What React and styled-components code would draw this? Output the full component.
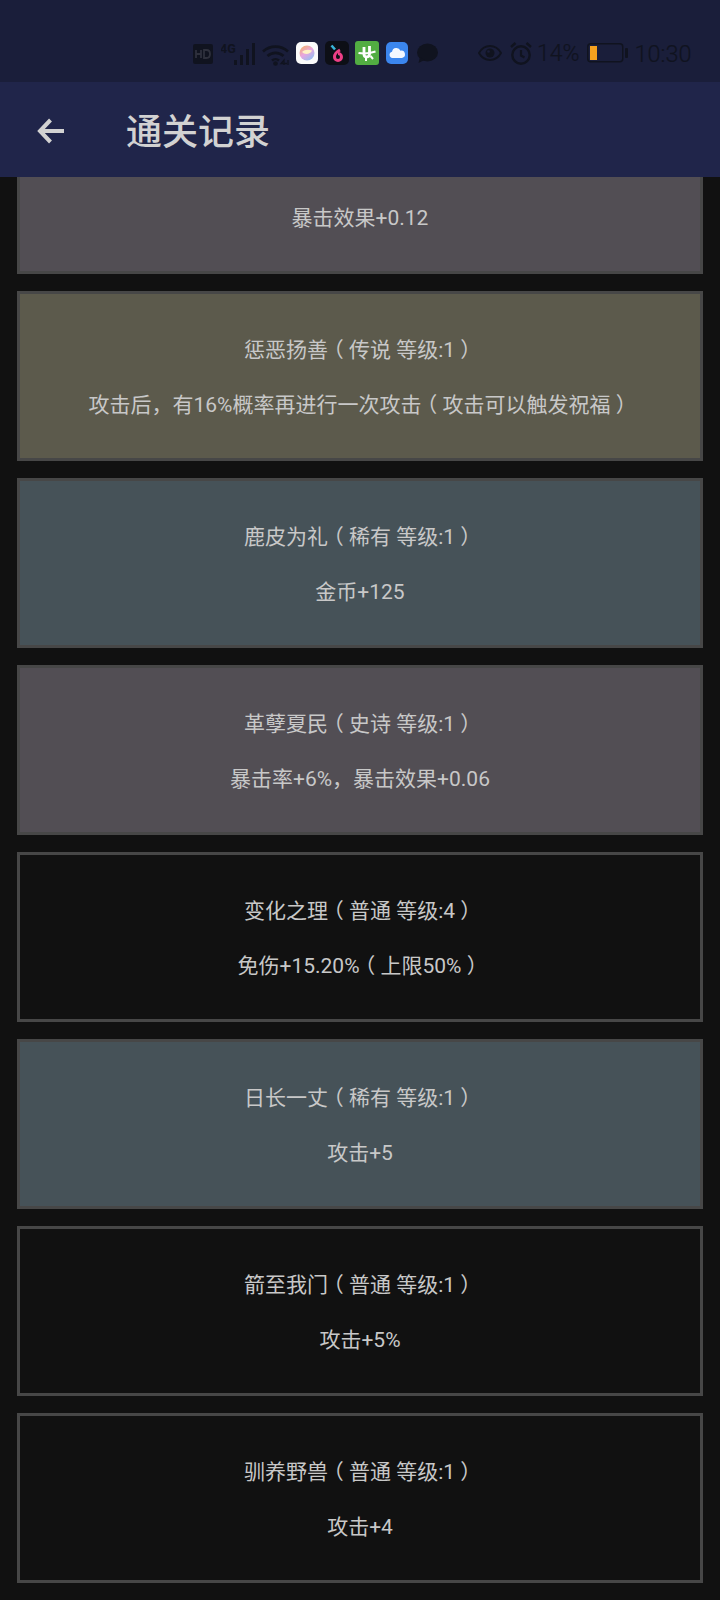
import React from "react";
import styled, { createGlobalStyle } from "styled-components";

const Global = createGlobalStyle`
  html, body { margin: 0; padding: 0; background: #111111; }
  * { box-sizing: border-box; }
`;

const Page = styled.div`
  width: 720px;
  height: 1600px;
  display: flex;
  flex-direction: column;
  overflow: hidden;
  background: #111111;
  font-family: Roboto, "Noto Sans CJK SC", sans-serif;
`;

const StatusBar = styled.div`
  height: 82px;
  flex: none;
  background: #1a1e3a;
  padding: 41px 28px 0 193px;
  display: flex;
  align-items: flex-start;
  color: #10131f;
`;

const Slot = styled.div`
  flex: none;
  display: block;
  width: ${(p) => p.$w}px;
  height: 26px;
  margin-right: ${(p) => p.$gap || 0}px;
  svg { display: block; }
`;

const StatusText = styled.span`
  flex: none;
  font-size: ${(p) => p.$size || 23}px;
  line-height: 26px;
  margin-right: ${(p) => p.$gap || 0}px;
  color: #10131f;
  font-weight: 300;
  -webkit-text-stroke: 0.2px #10131f;
`;

const AppBar = styled.header`
  height: 95px;
  flex: none;
  background: #20254a;
  display: flex;
  align-items: center;
  padding: 0 0 0 37px;
  position: relative;
  z-index: 1;
`;

const BackButton = styled.div`
  width: 28px;
  height: 26px;
  margin-right: 61px;
  flex: none;
  margin-top: 2px;
  svg { display: block; }
`;

const Title = styled.h1`
  margin: 6px 0 0;
  font-size: 36px;
  line-height: 44px;
  font-weight: 500;
  color: #d2d2d2;
`;

const Scroller = styled.main`
  flex: 1;
  min-height: 0;
  overflow: hidden;
`;

const List = styled.div`
  display: flex;
  flex-direction: column;
  gap: 17px;
  padding: 0 17px 17px;
  margin-top: -73px;
`;

const tones = {
  common: "#111111",
  rare: "#465258",
  epic: "#524e54",
  legend: "#5c5a4c",
};

const Card = styled.article`
  height: 170px;
  border: 3px solid #474747;
  background: ${(p) => tones[p.$tone]};
  display: flex;
  flex-direction: column;
  align-items: center;
  gap: 27px;
  padding-top: 42px;
  color: #c8c8c8;
  font-size: 21px;
  line-height: 28px;
  text-align: center;
`;

const Line = styled.div`
  height: 28px;
  white-space: nowrap;
`;

const Paren = styled.span`
  display: inline-block;
  width: 1em;
  line-height: 1;
  text-align: center;
  font-feature-settings: "halt";
`;

const withParens = (text) =>
  text.split(/([（）])/).map((part, i) =>
    part === "（" || part === "）" ? <Paren key={i}>{part}</Paren> : part
  );

const cards = [
  { tone: "epic", name: "", effect: "暴击效果+0.12" },
  { tone: "legend", name: "惩恶扬善（传说 等级:1）", effect: "攻击后，有16%概率再进行一次攻击（攻击可以触发祝福）" },
  { tone: "rare", name: "鹿皮为礼（稀有 等级:1）", effect: "金币+125" },
  { tone: "epic", name: "革孽夏民（史诗 等级:1）", effect: "暴击率+6%，暴击效果+0.06" },
  { tone: "common", name: "变化之理（普通 等级:4）", effect: "免伤+15.20%（上限50%）" },
  { tone: "rare", name: "日长一丈（稀有 等级:1）", effect: "攻击+5" },
  { tone: "common", name: "箭至我门（普通 等级:1）", effect: "攻击+5%" },
  { tone: "common", name: "驯养野兽（普通 等级:1）", effect: "攻击+4" },
];

const D = "#10131f";

const HdIcon = () => (
  <svg width="20" height="20" viewBox="0 0 20 20" style={{ marginTop: 3 }}>
    <rect width="20" height="20" rx="2" fill={D} />
    <path d="M3 6v8M3 10h5M8 6v8" stroke="#2e303c" strokeWidth="1.800" fill="none" />
    <path d="M11 6v8h2.500c2.200 0 3.500-1.500 3.500-4s-1.300-4-3.500-4z" stroke="#2e303c" strokeWidth="1.800" fill="none" />
  </svg>
);

const SignalIcon = () => (
  <svg width="36" height="24" viewBox="0 0 36 24" style={{ marginTop: 1 }}>
    <text x="-1" y="11" fontFamily="Roboto" fontWeight="700" fontSize="12.500" fill={D}>4G</text>
    <rect x="13" y="18" width="3" height="5" fill={D} />
    <rect x="19" y="13" width="3" height="10" fill={D} />
    <rect x="25" y="7" width="3" height="16" fill={D} />
    <rect x="31" y="1" width="3" height="22" fill={D} />
  </svg>
);

const WifiIcon = () => (
  <svg width="28" height="24" viewBox="0 0 28 24" fill="none" style={{ marginTop: 2 }}>
    <path d="M1 8.500C8 2 19 2 26 8.500" stroke={D} strokeWidth="2.600" />
    <path d="M5.500 13C10 8.800 17 8.800 21.500 13" stroke={D} strokeWidth="2.600" />
    <path d="M10 17.500C12 15.800 15 15.800 17 17.500" stroke={D} strokeWidth="2.600" />
    <circle cx="13.500" cy="20.500" r="2.300" fill={D} />
    <path d="M22 22V17l-3 3.500h6M26 17v5" stroke={D} strokeWidth="1.300" />
  </svg>
);

const BallApp = () => (
  <svg width="22" height="22" viewBox="0 0 22 22" style={{ marginTop: 1 }}>
    <defs>
      <linearGradient id="ball" x1="0.200" y1="0" x2="0.900" y2="1">
        <stop offset="0" stopColor="#f4b070" />
        <stop offset="0.450" stopColor="#e9a6e0" />
        <stop offset="1" stopColor="#86c4f4" />
      </linearGradient>
    </defs>
    <rect width="22" height="22" rx="5" fill="#fbfbfb" />
    <circle cx="11" cy="11" r="7.500" fill="url(#ball)" />
    <path d="M6 10c2.500-2.500 6-3 10-1.500-1 3-5 4-8 3" fill="#fff2c4" />
  </svg>
);

const SixApp = () => (
  <svg width="24" height="24" viewBox="0 0 24 24">
    <rect width="24" height="24" rx="5" fill="#0d0f16" />
    <path d="M15 9c-3 1.500-5.500 4-5.500 7a3.500 3.500 0 1 0 3.500-3.500" stroke="#ee3f86" strokeWidth="3" fill="none" />
    <path d="M6.500 4.500l3.500 4" stroke="#39b4d8" strokeWidth="2.600" />
  </svg>
);

const GreenApp = () => (
  <svg width="24" height="24" viewBox="0 0 24 24">
    <rect width="24" height="24" rx="3" fill="#52ad42" />
    <path d="M9 6v7c0 2 .9 3 2.500 3s3-1 3-3V5" stroke="#fff" strokeWidth="2.800" fill="none" />
    <path d="M3.500 12c4.500 .8 11 .5 17-1.500M11 16v4M15.500 15l2.500 3" stroke="#fff" strokeWidth="2" fill="none" />
  </svg>
);

const CloudApp = () => (
  <svg width="22" height="22" viewBox="0 0 22 22" style={{ marginTop: 1 }}>
    <rect width="22" height="22" rx="5" fill="#3b86ee" />
    <path d="M6.500 16a3.200 3.200 0 0 1-.5-6.300A4.500 4.500 0 0 1 14.500 8.700 3.700 3.700 0 0 1 16 16z" fill="#f4f8ff" />
  </svg>
);

const ChatIcon = () => (
  <svg width="22" height="21" viewBox="0 0 22 21" style={{ marginTop: 2 }}>
    <ellipse cx="11.500" cy="9.500" rx="10.500" ry="9" fill={D} />
    <path d="M4 14l-1.500 6 6-3z" fill={D} />
  </svg>
);

const EyeIcon = () => (
  <svg width="24" height="18" viewBox="0 0 24 18" fill="none" style={{ marginTop: 3 }}>
    <path d="M1 9c2.500-4.500 6.500-7 11-7s8.500 2.500 11 7c-2.500 4.500-6.500 7-11 7S3.500 13.500 1 9z" stroke={D} strokeWidth="2" />
    <circle cx="12" cy="9" r="4.500" fill={D} />
    <circle cx="10.500" cy="7.500" r="1.300" fill="#1a1e3a" />
  </svg>
);

const AlarmIcon = () => (
  <svg width="22" height="23" viewBox="0 0 22 23" fill="none" style={{ marginTop: 1 }}>
    <circle cx="11" cy="13" r="8.700" stroke={D} strokeWidth="2.400" />
    <path d="M11 8v5.500l3.500 2" stroke={D} strokeWidth="2.200" />
    <path d="M1 5l4.500-4M21 5l-4.500-4" stroke={D} strokeWidth="2.400" />
  </svg>
);

const BatteryIcon = () => (
  <svg width="41" height="20" viewBox="0 0 41 20" style={{ marginTop: 2 }}>
    <rect x="0.750" y="0.750" width="35" height="18" rx="3" fill="none" stroke={D} strokeWidth="1.500" />
    <rect x="3" y="3" width="7" height="14" fill="#f5a11f" />
    <rect x="38" y="5" width="3" height="10" rx="1" fill={D} />
  </svg>
);

const BackArrow = () => (
  <svg width="28" height="26" viewBox="0 0 28 26" fill="none">
    <path d="M27 13H3" stroke="#d2d2d2" strokeWidth="4" />
    <path d="M13.500 2L3 13l10.500 11" stroke="#d2d2d2" strokeWidth="4" />
  </svg>
);

export default function App() {
  return (
    <Page>
      <Global />
      <StatusBar>
        <Slot $w={20} $gap={8}><HdIcon /></Slot>
        <Slot $w={36} $gap={5}><SignalIcon /></Slot>
        <Slot $w={28} $gap={6}><WifiIcon /></Slot>
        <Slot $w={22} $gap={7}><BallApp /></Slot>
        <Slot $w={24} $gap={6}><SixApp /></Slot>
        <Slot $w={24} $gap={7}><GreenApp /></Slot>
        <Slot $w={22} $gap={8}><CloudApp /></Slot>
        <Slot $w={22} $gap={40}><ChatIcon /></Slot>
        <Slot $w={24} $gap={8}><EyeIcon /></Slot>
        <Slot $w={22} $gap={5}><AlarmIcon /></Slot>
        <StatusText $gap={7}>14%</StatusText>
        <Slot $w={41} $gap={7}><BatteryIcon /></Slot>
        <StatusText $size={23.5}>10:30</StatusText>
      </StatusBar>
      <AppBar>
        <BackButton><BackArrow /></BackButton>
        <Title>通关记录</Title>
      </AppBar>
      <Scroller>
        <List>
          {cards.map((c, i) => (
            <Card key={i} $tone={c.tone}>
              <Line>{withParens(c.name)}</Line>
              <Line>{withParens(c.effect)}</Line>
            </Card>
          ))}
        </List>
      </Scroller>
    </Page>
  );
}
